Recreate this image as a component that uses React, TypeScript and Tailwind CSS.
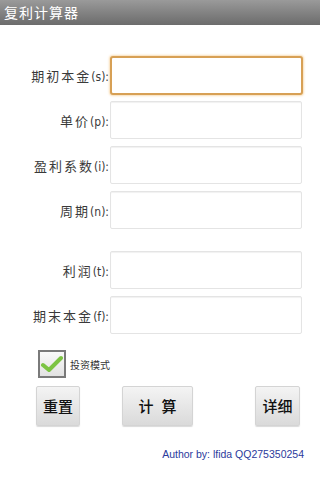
import React from "react";

const cjk = '"Noto Sans CJK SC", "Noto Sans", sans-serif';

function Label({ zh, en }: { zh: string; en: string }) {
  return (
    <div className="w-[110px] shrink-0 text-right text-[#3a3a3a] whitespace-nowrap pr-[1px]">
      <span className="text-[13px] tracking-[2px]" style={{ fontFamily: cjk }}>{zh}</span>
      <span className="text-[12px]" style={{ fontFamily: '"DejaVu Sans Condensed", "Liberation Sans Narrow", sans-serif' }}>{en}</span>
    </div>
  );
}

function Row({ zh, en, focused }: { zh: string; en: string; focused?: boolean }) {
  return (
    <div className="flex items-center h-[38px]">
      <Label zh={zh} en={en} />
      {focused ? (
        <div className="w-[193px] h-[39px] rounded-[3px] border-2 border-[#d7a055] bg-white shadow-[0_0_2px_1px_rgba(240,180,90,0.45)]" />
      ) : (
        <div className="w-[192px] h-[38px] rounded-[2px] border border-[#e4e4e4] bg-white shadow-[inset_0_1px_1px_rgba(0,0,0,0.06)]" />
      )}
    </div>
  );
}

function Btn({ children, w }: { children: React.ReactNode; w: string }) {
  return (
    <div
      className={`${w} h-[40px] flex items-center justify-center rounded-[2px] border border-[#d4d4d4] bg-gradient-to-b from-[#f4f4f4] to-[#dadada] text-[15px] text-[#111111] font-medium shadow-[0_1px_1px_rgba(0,0,0,0.15)]`}
      style={{ fontFamily: cjk }}
    >
      {children}
    </div>
  );
}

export default function App() {
  return (
    <div className="w-[320px] h-[480px] bg-white overflow-hidden relative">
      <div className="h-[25px] bg-gradient-to-b from-[#9a9a9a] to-[#6c6c6c] flex items-center pl-[4px]">
        <span className="text-white text-[14px] tracking-[1px]" style={{ fontFamily: cjk }}>复利计算器</span>
      </div>
      <div className="pt-[31px] flex flex-col">
        <div className="flex flex-col gap-[7px]">
          <Row zh="期初本金" en="(s):" focused />
          <Row zh="单价" en="(p):" />
          <Row zh="盈利系数" en="(i):" />
          <Row zh="周期" en="(n):" />
        </div>
        <div className="flex flex-col gap-[7px] mt-[22px]">
          <Row zh="利润" en="(t):" />
          <Row zh="期末本金" en="(f):" />
        </div>
        <div className="flex items-center mt-[16px] pl-[38px] gap-[4px]">
          <div className="w-[28px] h-[28px] border-2 border-[#7a7a7a] bg-gradient-to-b from-[#fafafa] to-[#e2e2e2] flex items-center justify-center">
            <svg width="22" height="18" viewBox="0 0 22 18">
              <path d="M2 10 L8 15 L20 3" fill="none" stroke="#7cc443" strokeWidth="4" strokeLinecap="round" strokeLinejoin="round" />
            </svg>
          </div>
          <span className="text-[10px] text-[#333333]" style={{ fontFamily: cjk }}>投资模式</span>
        </div>
        <div className="flex items-start mt-[8px]">
          <div className="ml-[36px]"><Btn w="w-[44px]">重置</Btn></div>
          <div className="ml-[42px]"><Btn w="w-[71px]"><span className="tracking-[8px] pl-[8px]">计算</span></Btn></div>
          <div className="ml-[62px]"><Btn w="w-[45px]">详细</Btn></div>
        </div>
        <div className="mt-[21px] pr-[16px] text-right text-[10.5px] text-[#2b3a9c]" style={{ fontFamily: '"Liberation Sans", Arial, sans-serif' }}>
          Author by: lfida QQ275350254
        </div>
      </div>
    </div>
  );
}
